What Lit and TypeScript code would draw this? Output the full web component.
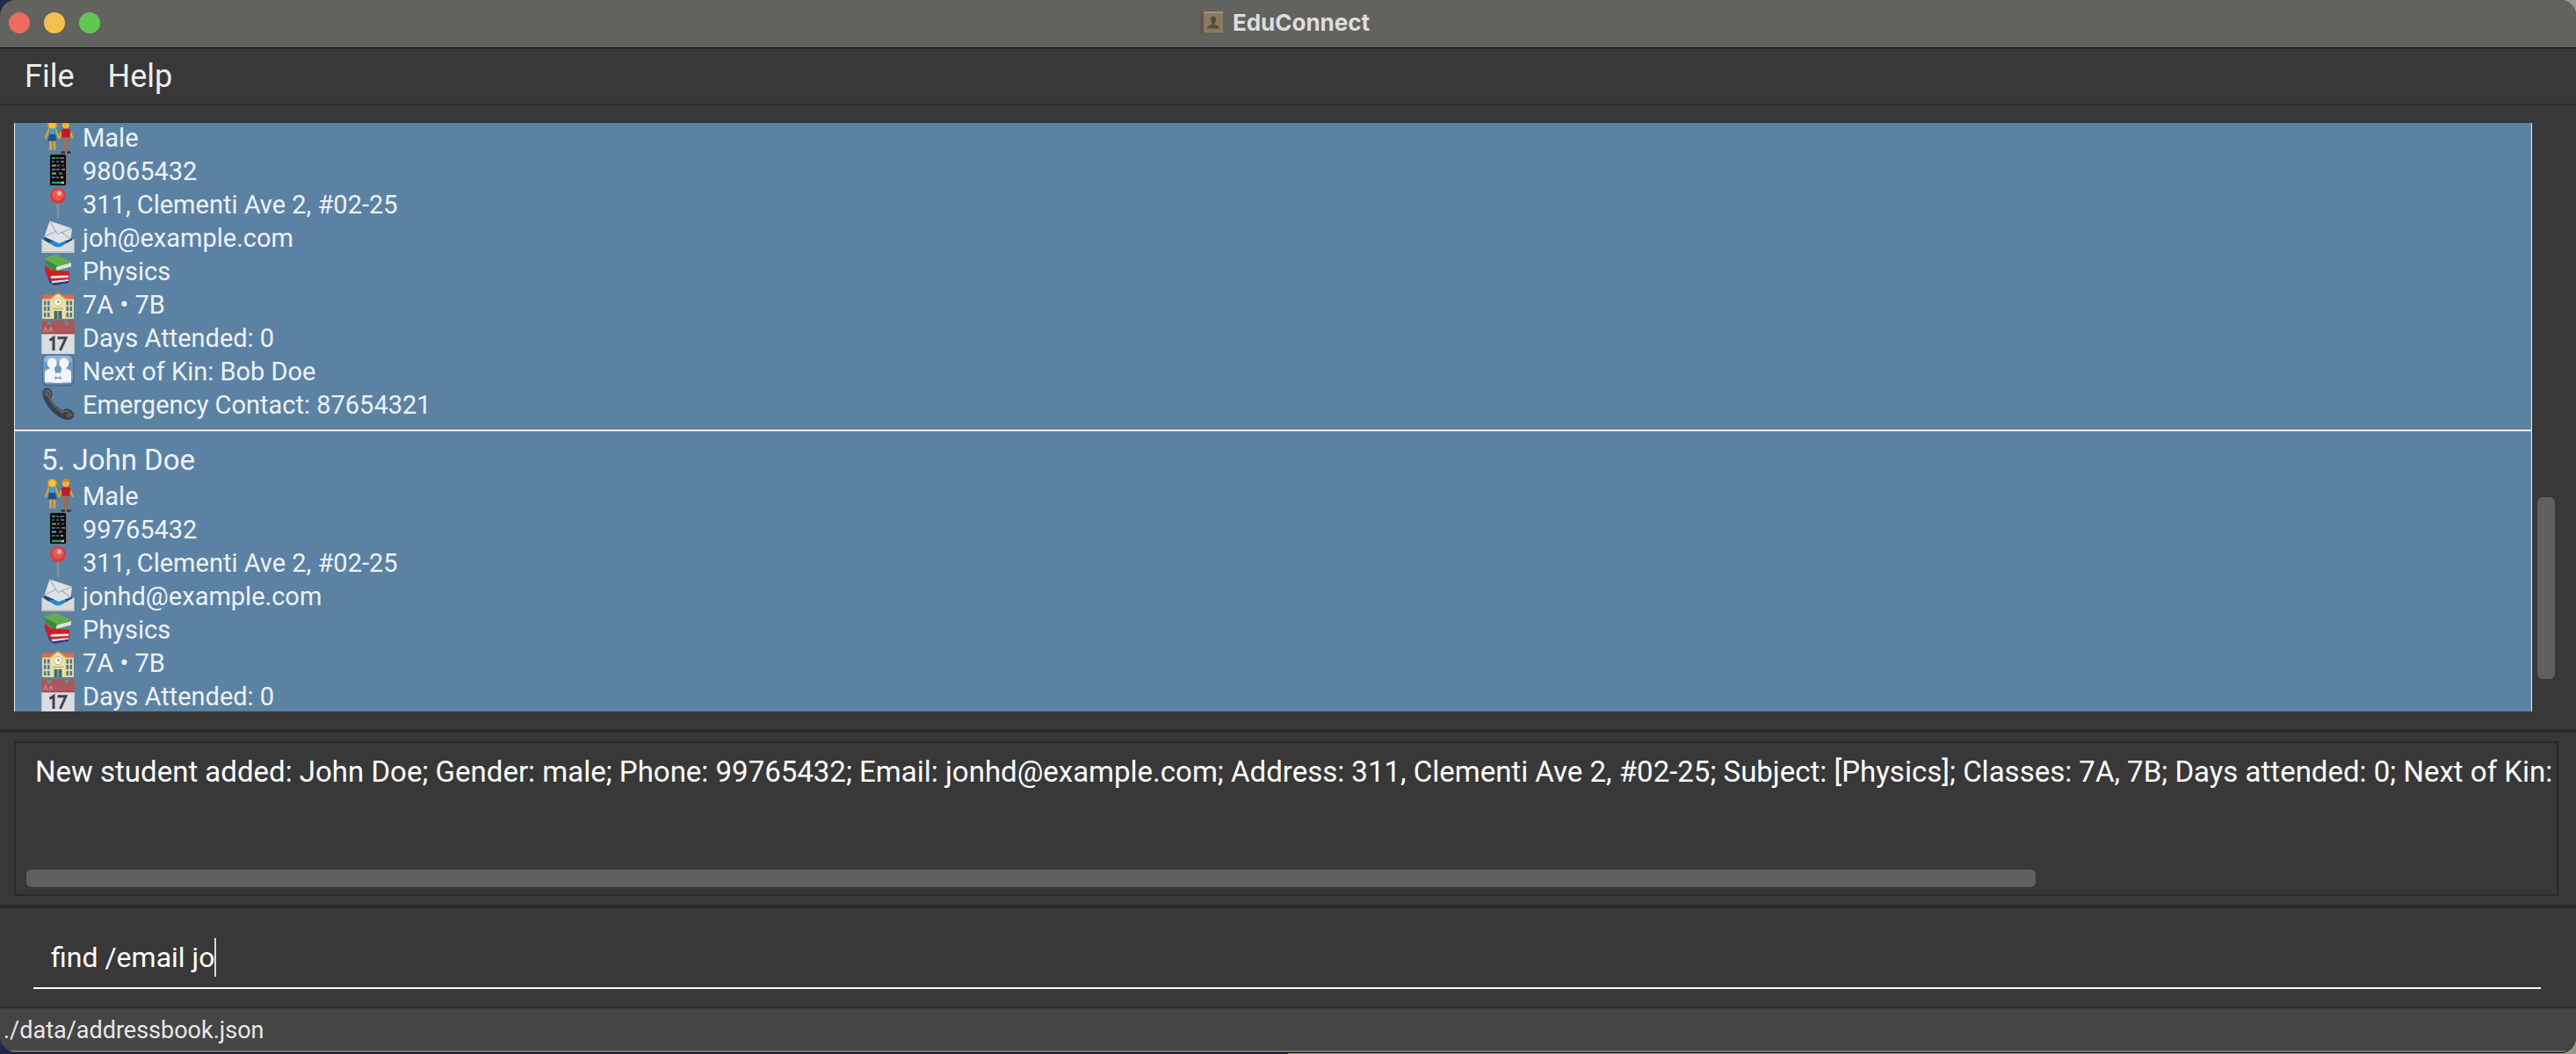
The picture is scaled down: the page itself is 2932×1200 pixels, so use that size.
import { LitElement, html, css, svg } from "lit";
import { customElement, property } from "lit/decorators.js";

type IconName =
  | "people" | "mobile" | "pin" | "mail" | "books"
  | "school" | "calendar" | "family" | "phone";

interface Detail {
  icon: IconName;
  text: string;
}

interface Student {
  name?: string;
  details: Detail[];
}

const students: Student[] = [
  {
    details: [
      { icon: "people", text: "Male" },
      { icon: "mobile", text: "98065432" },
      { icon: "pin", text: "311, Clementi Ave 2, #02-25" },
      { icon: "mail", text: "joh@example.com" },
      { icon: "books", text: "Physics" },
      { icon: "school", text: "7A • 7B" },
      { icon: "calendar", text: "Days Attended: 0" },
      { icon: "family", text: "Next of Kin: Bob Doe" },
      { icon: "phone", text: "Emergency Contact: 87654321" },
    ],
  },
  {
    name: "5. John Doe",
    details: [
      { icon: "people", text: "Male" },
      { icon: "mobile", text: "99765432" },
      { icon: "pin", text: "311, Clementi Ave 2, #02-25" },
      { icon: "mail", text: "jonhd@example.com" },
      { icon: "books", text: "Physics" },
      { icon: "school", text: "7A • 7B" },
      { icon: "calendar", text: "Days Attended: 0" },
    ],
  },
];

const message =
  "New student added: John Doe; Gender: male; Phone: 99765432; Email: jonhd@example.com; " +
  "Address: 311, Clementi Ave 2, #02-25; Subject: [Physics]; Classes: 7A, 7B; Days attended: 0; Next of Kin:";

const icons = {
  people: svg`
    <path d="M9 10 L5 20 M16 10 L20 20" stroke="#dba52c" stroke-width="2.200" stroke-linecap="round"/>
    <path d="M10.500 23 L10.500 34 M14.800 23 L14.800 34" stroke="#d9a033" stroke-width="3"/>
    <path d="M9.500 9 Q12.500 8 15.500 9 L15.500 15 L17.500 23.500 L7.500 23.500 L9.500 15 Z" fill="#1d4f8a"/>
    <path d="M9.500 9 Q12.500 8 15.500 9 L15.500 16 L9.500 16 Z" fill="#3ba2de"/>
    <path d="M7 5 Q7 0 12.500 0 Q18 0 18 5 L17 9 L8 9 Z" fill="#d9981f"/>
    <circle cx="12.500" cy="5.500" r="4" fill="#f3c33c"/>
    <path d="M24 11 L20.500 20 M32 11 L35.500 20" stroke="#dba52c" stroke-width="2.200" stroke-linecap="round"/>
    <path d="M24 18 h8 l-.300 18 h-3.200 l-.500 -12 l-.500 12 h-3.200 Z" fill="#8d7265"/>
    <path d="M22.500 11 Q28 7 33.500 11 L32 19.500 L24 19.500 Z" fill="#bd1c2c"/>
    <path d="M22.500 36.500 h4.500 M29.200 36.500 h4.500" stroke="#33343c" stroke-width="2.500"/>
    <ellipse cx="28" cy="4.800" rx="4.200" ry="4.800" fill="#eeb92f"/>
    <path d="M23.800 4 Q24 0 28 0 Q32 0 32.200 4 Q28 2.500 23.800 4" fill="#c9891c"/>`,
  mobile: svg`
    <rect x="9" y=".5" width="20" height="36.500" rx="2" fill="#6c7176"/>
    <rect x="10" y="1" width="18" height="35" rx="1.500" fill="#0c0d10"/>
    <g stroke-width="1.800">
      <path d="M12 5 h4" stroke="#37a056"/><path d="M17 5 h3" stroke="#3f7a55"/><path d="M21 5 h5" stroke="#765a8d"/>
      <path d="M12 9 h3" stroke="#2364a3"/><path d="M17 9 h3" stroke="#265c82"/><path d="M22 9 h4" stroke="#6b7078"/>
      <path d="M12 13.500 h5" stroke="#b49a3e"/><path d="M18 13.500 h3" stroke="#b34435"/><path d="M23 13.500 h3" stroke="#2c5f8f"/>
      <path d="M12 18 h4" stroke="#1f8e9b"/><path d="M17 18 h4" stroke="#8a3aa0"/><path d="M23 18 h4" stroke="#c0632e"/>
      <path d="M12 22.500 h5" stroke="#a9a88d"/><path d="M20 22.500 h4" stroke="#2f9c60"/>
      <path d="M12 27 h4" stroke="#2475b2"/><path d="M17 27 h3" stroke="#bd3b30"/><path d="M22 27 h3" stroke="#9fa5ad"/>
    </g>
    <path d="M12 33 h8" stroke="#2c9a4b" stroke-width="2.600"/><path d="M20 33 h3" stroke="#2c8fb6" stroke-width="2.600"/><path d="M23 33 h3" stroke="#bcc2c4" stroke-width="2.600"/>`,
  pin: svg`
    <path d="M17.400 17 h3.200 l-.600 18.500 h-2 Z" fill="#8c9097"/>
    <circle cx="19" cy="10" r="9" fill="#d83a3c"/>
    <circle cx="19" cy="9" r="6.500" fill="#ea5753"/>
    <circle cx="20.500" cy="7" r="2.600" fill="#f9b3a9"/>`,
  mail: svg`
    <path d="M3 21 L9 12 L29 12 L35 21 L35 26 L3 26 Z" fill="#174f84"/>
    <path d="M.5 21 L11 27 Q19 32 27 27 L37.500 21 L37.500 37 L.5 37 Z" fill="#dadada"/>
    <path d="M.5 36 h37" stroke="#bfc0c0" stroke-width="2"/>
    <path d="M9 24 Q19 37 29 24 Z" fill="#2689d5"/>
    <path d="M9.500 .5 L35 9 L33.500 21 L20 26 L3.500 18.500 Z" fill="#dfe1e5"/>
    <path d="M9.500 .5 L18 14.500 Q19 16 21 14.500 L35 9 M3.500 18.500 L16 12.500 M33 21 L24 14" fill="none" stroke="#a9adb5" stroke-width="1.200"/>`,
  books: svg`
    <path d="M3 15 L12 28 L30 26 L32 31 L14 35.500 Q9 34 8 29 Z" fill="#31408e"/>
    <path d="M12 30 L31 27 L31 31 L14 34.500 Q11 33 12 30" fill="#d6d9e8"/>
    <path d="M12 33.500 L31 31 L31 33 L14 36 Z" fill="#2d3683"/>
    <path d="M4 12 L10 18 L32 20 L32 29 L11 31 Q4 24 4 12 Z" fill="#cf1f22"/>
    <path d="M12 25 L31 24.500 L31 27 L12 28 Q9 27 12 25" fill="#e9e3e6"/>
    <path d="M2.500 6 L17 1 L33 9 L33 13 L17 20 Q6 15 2.500 6 Z" fill="#3c8b38"/>
    <path d="M2.500 5.500 L17 .5 L34 9 L19 14 Z" fill="#64ad4e"/>
    <path d="M18 14.500 L34 10 L34 14.500 L18 19 Q15.500 17 18 14.500" fill="#d9e3d8"/>`,
  school: svg`
    <rect x="1" y="13" width="36" height="24" fill="#dcd6a6"/>
    <path d="M1 8.500 h36 v5 h-36 Z" fill="#df6a43"/>
    <g fill="#52778f">
      <path d="M3 15.500 h2.500 v5 h-2.500 Z M7 15.500 h2.500 v5 h-2.500 Z M3 22 h2.500 v5 h-2.500 Z M7 22 h2.500 v5 h-2.500 Z M3 29 h2.500 v5 h-2.500 Z M7 29 h2.500 v5 h-2.500 Z"/>
      <path d="M28.500 15.500 h2.500 v5 h-2.500 Z M32.500 15.500 h2.500 v5 h-2.500 Z M28.500 22 h2.500 v5 h-2.500 Z M32.500 22 h2.500 v5 h-2.500 Z M28.500 29 h2.500 v5 h-2.500 Z M32.500 29 h2.500 v5 h-2.500 Z"/>
    </g>
    <path d="M11 13 L19 6 L27 13 L27 37 L11 37 Z" fill="#ebe3a7"/>
    <path d="M11 13.500 L19 6.500 L27 13.500" fill="none" stroke="#d8b65a" stroke-width="1.600"/>
    <path d="M16.500 7.500 L19 4 L21.500 7.500 Z" fill="#e06a48"/>
    <circle cx="19" cy="17" r="4.600" fill="#f7f6ee" stroke="#c7ba78"/>
    <path d="M19 14.500 v2.800 h2" stroke="#6d6f5c" fill="none"/>
    <path d="M13 24.500 h12" stroke="#bdb277" stroke-width="1.500"/>
    <rect x="14.500" y="27" width="9" height="10" fill="#446b75"/>
    <path d="M19 27 v10" stroke="#c8c28e"/>
    <path d="M1 36.500 h36" stroke="#78824f"/>`,
  calendar: svg`
    <rect x=".3" y="0" width="37.500" height="15" fill="#ad5559"/>
    <rect x=".3" y="15" width="37.500" height="23" fill="#d9dde2"/>
    <path d="M.3 14.800 h37.500" stroke="#91474d"/>
    <circle cx="9" cy="3" r="2.400" fill="#6a87a5"/><circle cx="29" cy="3" r="2.400" fill="#6a87a5"/>
    <path d="M3 13 l2 -5 l2 5 M9 13 l2 -5 l2 5" fill="none" stroke="#c9898c" stroke-width="1.300"/>
    <path d="M17 11 h17" stroke="#b9696c" stroke-dasharray="2 1"/>
    <path d="M9.500 22.500 L14 19.500 V34 M18.500 19.800 H28 L21.500 34" fill="none" stroke="#40444a" stroke-width="3"/>`,
  family: svg`
    <rect x=".5" y=".5" width="37" height="36.500" rx="6" fill="#4a7397"/>
    <rect x="2" y="1.500" width="34" height="33" rx="5" fill="#6b98c1"/>
    <path d="M3 9 Q3 2 9 2 h20 Q35 2 35 9 Z" fill="#94b6d4"/>
    <g fill="#f2f5fa">
      <ellipse cx="12.200" cy="10.500" rx="5.500" ry="6"/><ellipse cx="25.800" cy="10.500" rx="5.500" ry="6"/>
      <path d="M10 14 h5 v4 q3 6 0 10 v4.500 h-11 v-12 q1 -3 6 -4 Z"/>
      <path d="M28 14 h-5 v4 q-3 6 0 10 v4.500 h11 v-12 q-1 -3 -6 -4 Z"/>
      <circle cx="19" cy="24" r="2.800"/><path d="M14 33 q0 -5 5 -5 q5 0 5 5 Z"/>
    </g>`,
  phone: svg`
    <path d="M1.500 5 Q3 0 7 .8 Q12 2 12.500 7 Q13 10 10.500 12.500 Q15 21 24.500 26.500 Q28 23 32 25 Q37 27.500 37.500 30.500 Q37 36 31.500 37 Q25 37.500 18 32 Q7 24 2.500 12 Q.8 8 1.500 5 Z" fill="#3c4047"/>
    <path d="M3.500 5 Q6 1.500 9 4.500 Q11.500 8 8.500 11 Q13.500 22 24 28.500 Q28 26 31.500 28" fill="none" stroke="#666b73" stroke-width="1.500"/>
    <ellipse cx="6" cy="7" rx="2.500" ry="4" fill="#565a61"/>
    <ellipse cx="32" cy="31.500" rx="4" ry="2.300" transform="rotate(-18 32 31.500)" fill="#565a61"/>`,
};

@customElement("detail-icon")
export class DetailIcon extends LitElement {
  @property() name: IconName = "people";

  static styles = css`
    :host { display: block; flex: none; width: 38px; height: 38px; }
    .glyph { display: block; width: 100%; height: 100%; }
  `;

  render() {
    return html`<svg class="glyph" viewBox="0 0 38 38" fill="none" aria-hidden="true">${icons[this.name]}</svg>`;
  }
}

@customElement("student-card")
export class StudentCard extends LitElement {
  @property({ attribute: false }) student!: Student;

  static styles = css`
    :host {
      display: block;
      padding: 10px 30px;
      border-bottom: 2px solid #efe6ea;
      color: #eef1f7;
    }
    .name { margin: 0; font-size: 33px; font-weight: 400; line-height: 46px; height: 44px; }
    .details { margin: 0; padding: 0; list-style: none; }
    .detail { display: flex; gap: 9px; height: 38px; font-size: 29px; line-height: 40px; white-space: nowrap; }
  `;

  render() {
    const { name, details } = this.student;
    return html`
      ${name ? html`<h2 class="name">${name}</h2>` : ""}
      <ul class="details">
        ${details.map((d) => html`
          <li class="detail"><detail-icon name=${d.icon}></detail-icon><span>${d.text}</span></li>`)}
      </ul>`;
  }
}

@customElement("app-root")
export class AppRoot extends LitElement {
  static styles = css`
    :host {
      display: block;
      height: 100vh;
      box-sizing: border-box;
      padding-bottom: 1px;
      background: linear-gradient(to right, #23284e 50%, #9c968a 50%);
      font-family: Roboto, "Liberation Sans", sans-serif;
      color: #ffffff;
    }
    .window {
      display: flex;
      flex-direction: column;
      height: 100%;
      box-sizing: border-box;
      border-bottom: 1px solid #101010;
      border-radius: 18px;
      overflow: hidden;
      background: #383838;
    }
    .titlebar {
      display: grid;
      grid-template-columns: 1fr auto 1fr;
      align-items: center;
      height: 52px;
      padding: 0 18px 2px 10px;
      border-bottom: 1px solid #000000;
      background: #62625f;
    }
    .lights { display: flex; gap: 16px; }
    .light { width: 24px; height: 24px; padding: 0; border: 0; border-radius: 50%; }
    .close { background: #ed6a5e; }
    .minimise { background: #f5bf4f; }
    .zoom { background: #62c554; }
    .title { display: flex; align-items: center; gap: 10px; margin: 0; font-family: Inter, "Liberation Sans", sans-serif; font-size: 26px; font-weight: 700; line-height: 32px; color: #dededc; }
    .book { width: 28px; height: 28px; }
    .menubar { display: flex; gap: 38px; padding: 9px 28px 8px; border-bottom: 2px solid #2b2b2b; }
    .menu { padding: 0; border: 0; background: none; font: inherit; font-size: 36px; line-height: 46px; color: #ececec; }
    .listpane { display: flex; flex: 1; gap: 6px; min-height: 0; padding: 20px 24px 20px 16px; }
    .list {
      flex: 1;
      overflow: hidden;
      border: solid #efe6ea;
      border-width: 0 1px;
      background: #5b82a3;
    }
    .track { display: flex; flex-direction: column; width: 20px; }
    .before { flex: 426; }
    .thumb { flex: 207; border-radius: 6px; background: #606060; }
    .after { flex: 37; }
    .result { padding: 10px 20px 10px 16px; border: solid #2a2a2a; border-width: 4px 0; }
    .frame { display: flex; flex-direction: column; border: 2px solid #2a2a2a; }
    .message {
      height: 144px;
      box-sizing: border-box;
      padding: 11px 0 0 22px;
      border: 0;
      outline: 0;
      resize: none;
      overflow: hidden;
      white-space: pre;
      background: none;
      font: inherit;
      font-size: 33px;
      line-height: 44px;
      color: #ffffff;
    }
    .hscroll { display: flex; padding: 0 12px 8px; }
    .hthumb { flex: 2287; height: 20px; border-radius: 6px; background: #606060; }
    .hrest { flex: 581; }
    .command { display: flex; align-items: center; margin: 0 40px 20px 38px; padding: 30px 0 8px 20px; height: 52px; border-bottom: 2px solid #ffffff; }
    .entry {
      field-sizing: content;
      padding: 0;
      border: 0;
      outline: 0;
      background: none;
      font: inherit;
      font-size: 32px;
      line-height: 44px;
      color: #ffffff;
    }
    .caret { width: 2px; height: 44px; background: #d8d8d8; }
    .status { padding: 7px 4px 5px; border-top: 2px solid #2b2b2b; border-bottom: 2px solid #757575; background: #454545; font-size: 27px; line-height: 36px; color: #e8e8e8; }
  `;

  firstUpdated() {
    const list = this.renderRoot.querySelector<HTMLElement>(".list");
    customElements.whenDefined("student-card").then(() => {
      requestAnimationFrame(() => {
        if (list) list.scrollTop = 13;
      });
    });
  }

  render() {
    return html`
      <div class="window">
        <header class="titlebar">
          <div class="lights">
            <button class="light close" aria-label="Close"></button>
            <button class="light minimise" aria-label="Minimise"></button>
            <button class="light zoom" aria-label="Zoom"></button>
          </div>
          <h1 class="title">
            <svg class="book" viewBox="0 0 28 28" aria-hidden="true">
              <rect x="1" y="2" width="26" height="24" rx="1" fill="#8a795c"/>
              <rect x="1" y="1.500" width="4" height="24.500" rx="1" fill="#5b5452"/>
              <path d="M5 2 h22" stroke="#aaa08c" stroke-width="1.500"/>
              <path d="M2 26 h25" stroke="#5d574c"/>
              <ellipse cx="16" cy="10.500" rx="3" ry="4" fill="#554c40"/>
              <path d="M14.500 13 h3 v3 q5.500 1 5.500 4.500 h-14 q0 -3.500 5.500 -4.500 Z" fill="#554c40"/>
            </svg>
            <span>EduConnect</span>
          </h1>
        </header>
        <nav class="menubar">
          <button class="menu">File</button>
          <button class="menu">Help</button>
        </nav>
        <main class="listpane">
          <div class="list">
            ${students.map((s) => html`<student-card .student=${s}></student-card>`)}
          </div>
          <div class="track">
            <div class="before"></div>
            <div class="thumb"></div>
            <div class="after"></div>
          </div>
        </main>
        <section class="result">
          <div class="frame">
            <textarea class="message" readonly wrap="off" aria-label="Result" .value=${message}></textarea>
            <div class="hscroll"><div class="hthumb"></div><div class="hrest"></div></div>
          </div>
        </section>
        <div class="command">
          <input class="entry" type="text" aria-label="Command" .value=${"find /email jo"} />
          <span class="caret"></span>
        </div>
        <footer class="status">./data/addressbook.json</footer>
      </div>`;
  }
}
